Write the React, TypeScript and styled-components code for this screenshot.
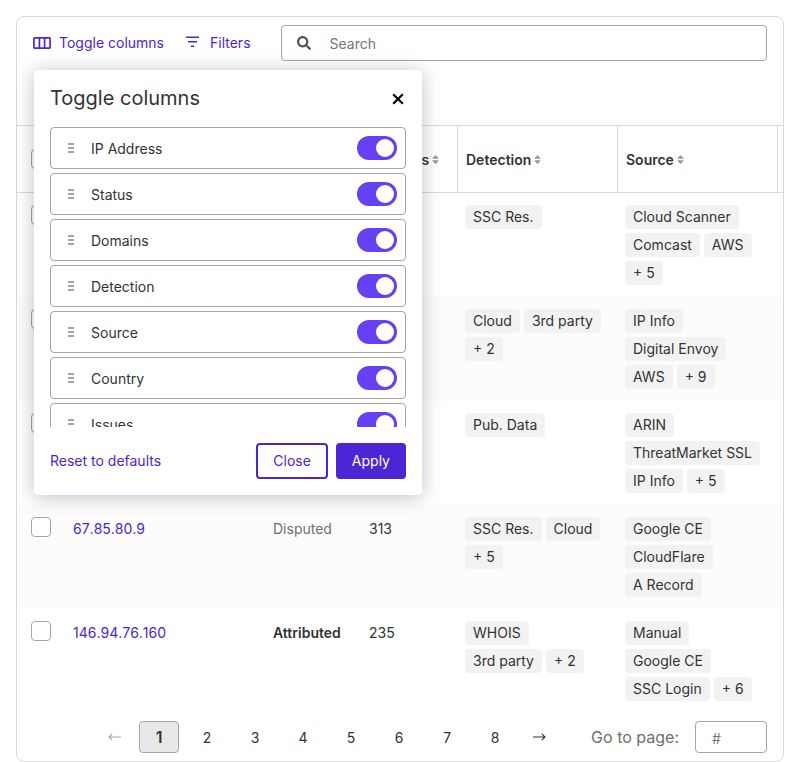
import React from "react";
import styled, { createGlobalStyle } from "styled-components";
import { FaSearch, FaSort } from "react-icons/fa";

const GlobalStyle = createGlobalStyle`
  *, *::before, *::after { box-sizing: border-box; }
  body {
    margin: 0;
    background: #fff;
    color: #333;
    font: 400 14px/24px Inter, sans-serif;
  }
  button, input { font: inherit; color: inherit; }
`;

const Card = styled.main`
  margin: 16px 16px 0;
  border: 1px solid #d9d9d9;
  border-radius: 8px;
  background: #fff;
`;

const Toolbar = styled.header`
  display: flex;
  align-items: flex-start;
  min-height: 108px;
  padding: 8px 16px;
`;

const ToolbarItem = styled.div`
  position: relative;
  display: flex;
  align-items: center;
  height: 36px;
  margin-right: 22px;
`;

const LinkButton = styled.button<{ $gap?: number }>`
  display: flex;
  align-items: center;
  gap: ${(p) => p.$gap ?? 8}px;
  padding: 0;
  border: 0;
  background: none;
  color: #4c26d4;
  white-space: nowrap;
  cursor: pointer;
`;

const SearchBox = styled.label`
  display: flex;
  flex: 1;
  align-items: center;
  gap: 16px;
  height: 36px;
  margin-left: 8px;
  padding: 0 15px;
  border: 1px solid #a5a5a5;
  border-radius: 4px;
  color: #555;
`;

const SearchInput = styled.input`
  flex: 1;
  min-width: 0;
  height: 32px;
  padding: 0 3px;
  border: 0;
  outline: 0;
  background: none;
  &::placeholder { color: #757575; opacity: 1; }
`;

const Panel = styled.section`
  position: absolute;
  z-index: 2;
  top: 45px;
  left: 1px;
  width: 388px;
  border-radius: 4px;
  background: #fff;
  box-shadow: 0 2px 20px rgba(0, 0, 0, 0.25);
`;

const PanelHeader = styled.div`
  display: flex;
  align-items: center;
  justify-content: space-between;
  height: 57px;
  padding: 0 16px;
`;

const PanelTitle = styled.h2`
  margin: 0;
  padding-bottom: 2px;
  font-size: 20px;
  font-weight: 400;
  line-height: 32px;
`;

const CloseButton = styled.button`
  display: flex;
  padding: 2px;
  border: 0;
  background: none;
  color: #000;
  cursor: pointer;
`;

const ColumnList = styled.ul`
  display: flex;
  flex-direction: column;
  gap: 4px;
  height: 300px;
  margin: 0;
  padding: 0 16px;
  overflow: hidden;
  list-style: none;
`;

const ColumnItem = styled.li`
  display: flex;
  flex: none;
  align-items: center;
  height: 42px;
  padding: 0 8px 0 16px;
  border: 1px solid #a5a5a5;
  border-radius: 4px;
  svg { flex: none; }
`;

const ColumnLabel = styled.label`
  flex: 1;
  padding: 2px 0 0 16px;
`;

const Switch = styled.input`
  appearance: none;
  flex: none;
  width: 40px;
  height: 24px;
  margin: 0;
  padding: 3px;
  border-radius: 12px;
  background: #a5a5a5;
  cursor: pointer;
  &::before {
    content: "";
    display: block;
    width: 18px;
    height: 18px;
    border-radius: 50%;
    background: #fff;
  }
  &:checked { background: #6640f2; }
  &:checked::before { margin-left: 16px; }
`;

const PanelFooter = styled.div`
  display: flex;
  align-items: center;
  gap: 8px;
  padding: 16px;
`;

const Spacer = styled.div`
  flex: 1;
`;

const ActionButton = styled.button<{ $primary?: boolean }>`
  height: 36px;
  padding: 0 ${(p) => (p.$primary ? 14 : 15)}px;
  border: 2px solid #4c26d4;
  border-radius: 4px;
  background: ${(p) => (p.$primary ? "#4c26d4" : "#fff")};
  color: ${(p) => (p.$primary ? "#fff" : "#4c26d4")};
  cursor: pointer;
`;

const Table = styled.table`
  width: 100%;
  border-spacing: 0;
  table-layout: fixed;
`;

const HeadCell = styled.th<{ $divider?: boolean }>`
  height: 68px;
  padding: 0 8px;
  border: solid #d9d9d9;
  border-width: 1px 0 1px ${(p) => (p.$divider ? 1 : 0)}px;
  text-align: left;
`;

const SortButton = styled.button`
  display: flex;
  align-items: center;
  gap: 2px;
  padding: 2px 0 0;
  border: 0;
  background: none;
  font-weight: 600;
  white-space: nowrap;
  cursor: pointer;
  svg { margin: 0 0 2px -1px; color: #999; }
`;

const Row = styled.tr`
  height: 104px;
  &:nth-child(even) { background: #fcfcfc; }
`;

const Cell = styled.td<{ $tone?: string; $numeric?: boolean }>`
  padding: 12px 8px;
  vertical-align: top;
  color: ${(p) => (p.$tone === "Disputed" ? "#707070" : "inherit")};
  font-weight: ${(p) => (p.$tone === "Attributed" ? 600 : 400)};
  font-kerning: ${(p) => (p.$numeric ? "none" : "auto")};
`;

const Check = styled.input`
  appearance: none;
  display: block;
  width: 20px;
  height: 20px;
  margin: 0 6px;
  border: 1px solid #a5a5a5;
  border-radius: 4px;
  background: #fff;
`;

const IpLink = styled.a`
  color: #4c26d4;
  text-decoration: none;
`;

const Tags = styled.div`
  display: flex;
  flex-wrap: wrap;
  gap: 4px;
`;

const Tag = styled.span`
  padding: 0 8px;
  border-radius: 4px;
  background: #f2f2f2;
  white-space: nowrap;
`;

const Footer = styled.footer`
  display: flex;
  align-items: center;
  justify-content: flex-end;
  padding: 8px 16px;
`;

const Pages = styled.nav`
  display: flex;
  gap: 8px;
  margin-right: 36px;
`;

const PageButton = styled.button<{ $current?: boolean }>`
  width: 40px;
  height: 32px;
  padding: ${(p) => (p.$current ? 0 : 2)}px 0 0;
  border: 1px solid ${(p) => (p.$current ? "#a5a5a5" : "transparent")};
  border-radius: 4px;
  background: ${(p) => (p.$current ? "#e8e8e8" : "none")};
  font-size: ${(p) => (p.$current ? 16 : 14)}px;
  font-weight: ${(p) => (p.$current ? 600 : 400)};
  cursor: pointer;
`;

const ArrowButton = styled.button`
  display: flex;
  align-items: center;
  justify-content: center;
  width: 32px;
  height: 32px;
  padding: 0;
  border: 0;
  background: none;
  &:disabled { color: #a5a5a5; }
`;

const GoTo = styled.label`
  display: flex;
  align-items: center;
  gap: 16px;
  color: #707070;
  font-size: 16px;
  white-space: nowrap;
`;

const PageInput = styled.input`
  width: 72px;
  height: 32px;
  padding: 2px 16px 0;
  border: 1px solid #a5a5a5;
  border-radius: 4px;
  font-size: 14px;
  &::placeholder { color: #757575; opacity: 1; }
`;

const ColumnsIcon = () => (
  <svg width="18" height="12" viewBox="0 0 18 12" fill="none" stroke="currentColor" strokeWidth="1.7" aria-hidden="true">
    <rect x="0.9" y="0.9" width="16.2" height="10.2" rx="0.8" />
    <path d="M6.4 1v10M11.6 1v10" />
  </svg>
);

const FiltersIcon = () => (
  <svg width="13" height="14" viewBox="0 0 13 14" fill="none" stroke="currentColor" strokeWidth="1.6" aria-hidden="true">
    <path d="M0 1.2h13M2 5.8h9M4.8 10.2h3.4" />
  </svg>
);

const CloseIcon = () => (
  <svg width="12" height="12" viewBox="0 0 12 12" fill="none" stroke="currentColor" strokeWidth="2.2" aria-hidden="true">
    <path d="M1.2 1.2l9.6 9.6M10.8 1.2l-9.6 9.6" />
  </svg>
);

const GripIcon = () => (
  <svg width="8" height="12" viewBox="0 0 8 12" fill="none" stroke="#a5a5a5" strokeWidth="1.9" aria-hidden="true">
    <path d="M1 2h6M1 6h6M1 10h6" />
  </svg>
);

const ArrowIcon = ({ back }: { back?: boolean }) => (
  <svg width="14" height="10" viewBox="0 0 14 10" fill="none" stroke="currentColor" strokeWidth="1.1" aria-hidden="true">
    <path d={back ? "M13 5H1.2M4.2 1.8L1 5l3.2 3.2" : "M1 5h11.8M9.8 1.8L13 5 9.8 8.2"} />
  </svg>
);

const toggles = ["IP Address", "Status", "Domains", "Detection", "Source", "Country", "Issues"];

const columns = [
  { name: "IP Address", divider: false },
  { name: "Status", divider: true },
  { name: "Domains", divider: true },
  { name: "Detection", divider: true },
  { name: "Source", divider: true },
];

interface Asset {
  ip?: string;
  status?: string;
  domains?: number;
  detection: string[];
  source: string[];
}

const assets: Asset[] = [
  { detection: ["SSC Res."], source: ["Cloud Scanner", "Comcast", "AWS", "+ 5"] },
  { detection: ["Cloud", "3rd party", "+ 2"], source: ["IP Info", "Digital Envoy", "AWS", "+ 9"] },
  { detection: ["Pub. Data"], source: ["ARIN", "ThreatMarket SSL", "IP Info", "+ 5"] },
  {
    ip: "67.85.80.9",
    status: "Disputed",
    domains: 313,
    detection: ["SSC Res.", "Cloud", "+ 5"],
    source: ["Google CE", "CloudFlare", "A Record"],
  },
  {
    ip: "146.94.76.160",
    status: "Attributed",
    domains: 235,
    detection: ["WHOIS", "3rd party", "+ 2"],
    source: ["Manual", "Google CE", "SSC Login", "+ 6"],
  },
];

const TagList = ({ items }: { items: string[] }) => (
  <Tags>
    {items.map((item) => (
      <Tag key={item}>{item}</Tag>
    ))}
  </Tags>
);

const TogglePanel = () => (
  <Panel role="dialog" aria-labelledby="panel-title">
    <PanelHeader>
      <PanelTitle id="panel-title">Toggle columns</PanelTitle>
      <CloseButton type="button" aria-label="Close panel">
        <CloseIcon />
      </CloseButton>
    </PanelHeader>
    <ColumnList>
      {toggles.map((name) => {
        const id = `toggle-${name.toLowerCase().replace(" ", "-")}`;
        return (
          <ColumnItem key={name}>
            <GripIcon />
            <ColumnLabel htmlFor={id}>{name}</ColumnLabel>
            <Switch id={id} type="checkbox" role="switch" defaultChecked />
          </ColumnItem>
        );
      })}
    </ColumnList>
    <PanelFooter>
      <LinkButton type="button">Reset to defaults</LinkButton>
      <Spacer />
      <ActionButton type="button">Close</ActionButton>
      <ActionButton type="button" $primary>Apply</ActionButton>
    </PanelFooter>
  </Panel>
);

export default function App() {
  return (
    <>
      <GlobalStyle />
      <Card>
        <Toolbar>
          <ToolbarItem>
            <LinkButton type="button" aria-expanded="true">
              <ColumnsIcon />
              Toggle columns
            </LinkButton>
            <TogglePanel />
          </ToolbarItem>
          <ToolbarItem>
            <LinkButton type="button" $gap={11}>
              <FiltersIcon />
              Filters
            </LinkButton>
          </ToolbarItem>
          <SearchBox>
            <FaSearch size={14} aria-hidden="true" />
            <SearchInput type="search" placeholder="Search" aria-label="Search" />
          </SearchBox>
        </Toolbar>
        <Table>
          <colgroup>
            <col width="48" />
            <col width="200" />
            <col width="96" />
            <col width="96" />
            <col width="160" />
            <col width="160" />
            <col />
          </colgroup>
          <thead>
            <tr>
              <HeadCell scope="col">
                <Check type="checkbox" aria-label="Select all" />
              </HeadCell>
              {columns.map(({ name, divider }) => (
                <HeadCell key={name} scope="col" $divider={divider}>
                  <SortButton type="button">
                    {name}
                    <FaSort size={11} aria-hidden="true" />
                  </SortButton>
                </HeadCell>
              ))}
              <HeadCell $divider />
            </tr>
          </thead>
          <tbody>
            {assets.map((asset, index) => (
              <Row key={index}>
                <Cell>
                  <Check type="checkbox" aria-label={`Select row ${index + 1}`} />
                </Cell>
                <Cell $numeric>{asset.ip && <IpLink href="#">{asset.ip}</IpLink>}</Cell>
                <Cell $tone={asset.status}>{asset.status}</Cell>
                <Cell $numeric>{asset.domains}</Cell>
                <Cell>
                  <TagList items={asset.detection} />
                </Cell>
                <Cell>
                  <TagList items={asset.source} />
                </Cell>
                <Cell />
              </Row>
            ))}
          </tbody>
        </Table>
        <Footer>
          <Pages aria-label="Pagination">
            <ArrowButton type="button" aria-label="Previous page" disabled>
              <ArrowIcon back />
            </ArrowButton>
            {[1, 2, 3, 4, 5, 6, 7, 8].map((page) => (
              <PageButton key={page} type="button" $current={page === 1}>
                {page}
              </PageButton>
            ))}
            <ArrowButton type="button" aria-label="Next page">
              <ArrowIcon />
            </ArrowButton>
          </Pages>
          <GoTo>
            Go to page:
            <PageInput type="text" placeholder="#" />
          </GoTo>
        </Footer>
      </Card>
    </>
  );
}
